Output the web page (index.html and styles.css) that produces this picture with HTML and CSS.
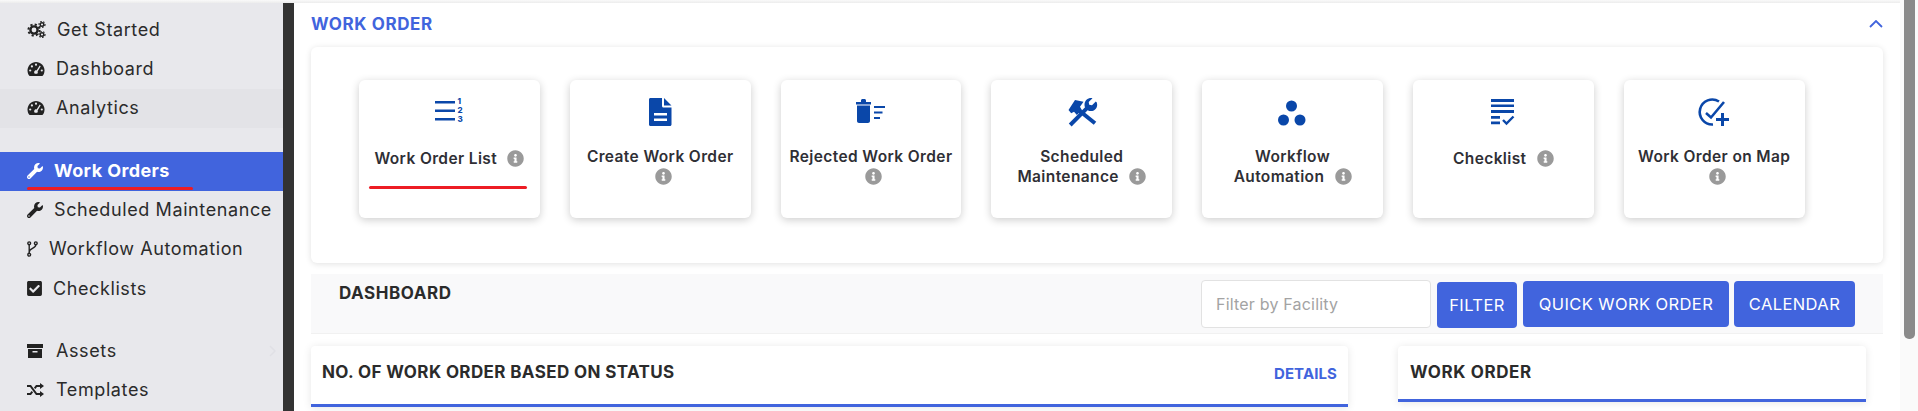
FILE: index.html
```html
<!DOCTYPE html>
<html lang="en">
<head>
  <meta charset="UTF-8" />
  <title>Work Order</title>
  <link rel="stylesheet" href="styles.css">
</head>
<body>
  <!-- Shared icons -->
  <svg class="sprite" xmlns="http://www.w3.org/2000/svg">
    <symbol id="i-info" viewBox="0 0 512 512">
      <path d="M256 8C119.043 8 8 119.083 8 256c0 136.997 111.043 248 248 248s248-111.003 248-248C504 119.083 392.957 8 256 8zm0 110c23.196 0 42 18.804 42 42s-18.804 42-42 42-42-18.804-42-42 18.804-42 42-42zm56 254c0 6.627-5.373 12-12 12h-88c-6.627 0-12-5.373-12-12v-24c0-6.627 5.373-12 12-12h12v-64h-12c-6.627 0-12-5.373-12-12v-24c0-6.627 5.373-12 12-12h64c6.627 0 12 5.373 12 12v100h12c6.627 0 12 5.373 12 12v24z"/>
    </symbol>
    <symbol id="i-wrench" viewBox="0 0 512 512">
      <path d="M507.73 109.1c-2.24-9.03-13.54-12.09-20.12-5.51l-74.36 74.36-67.88-11.31-11.31-67.88 74.36-74.36c6.62-6.62 3.43-17.9-5.66-20.16-47.38-11.74-99.55.91-136.58 37.93-39.64 39.64-50.55 97.1-34.05 147.2L18.74 402.76c-24.99 24.99-24.99 65.51 0 90.5 24.99 24.99 65.51 24.99 90.5 0l213.21-213.21c50.12 16.71 107.47 5.68 147.37-34.22 37.07-37.07 49.7-89.32 37.91-136.73zM64 472c-13.25 0-24-10.75-24-24 0-13.26 10.75-24 24-24s24 10.74 24 24c0 13.25-10.75 24-24 24z"/>
    </symbol>
    <symbol id="i-gauge" viewBox="0 0 18 16">
      <path d="M9 1C4.3 1 .5 4.8.5 9.5c0 1.9.6 3.6 1.6 5 .3.4.7.5 1.1.5h11.6c.4 0 .8-.1 1.1-.5 1-1.4 1.6-3.1 1.6-5C17.5 4.8 13.7 1 9 1z"/>
      <g fill="#e8e8ec">
        <circle cx="9" cy="3.7" r="1.1"/>
        <circle cx="4.9" cy="5.4" r="1.1"/>
        <circle cx="3.2" cy="9.5" r="1.1"/>
        <circle cx="14.8" cy="9.5" r="1.1"/>
        <path d="M12.7 4.6l1 .6-3.1 5.3c.4.9.2 1.8-.4 2.3H7.8c-.9-.8-.9-2.2 0-3 .6-.5 1.2-.6 1.8-.4z"/>
      </g>
    </symbol>
  </svg>

  <div class="layout">
    <div class="app">
      <div class="top-strip"></div>
      <div class="app-row">

        <!-- Sidebar -->
        <aside class="sidebar">
          <a class="nav-item">
            <svg class="nav-icon icon-cogs" viewBox="0 0 19 17">
              <g fill="none" stroke="#222">
                <circle cx="7" cy="9" r="3.6" stroke-width="2.4"/>
                <circle cx="7" cy="9" r="5.6" stroke-width="2" stroke-dasharray="2.2 2.2"/>
                <circle cx="15" cy="3.5" r="1.8" stroke-width="1.4"/>
                <circle cx="15" cy="3.5" r="3" stroke-width="1.2" stroke-dasharray="1.5 1.5"/>
                <circle cx="15" cy="13.5" r="1.8" stroke-width="1.4"/>
                <circle cx="15" cy="13.5" r="3" stroke-width="1.2" stroke-dasharray="1.5 1.5"/>
              </g>
            </svg>
            Get Started
          </a>
          <a class="nav-item">
            <svg class="nav-icon icon-gauge"><use href="#i-gauge"/></svg>
            Dashboard
          </a>
          <a class="nav-item nav-item-hover">
            <svg class="nav-icon icon-gauge"><use href="#i-gauge"/></svg>
            Analytics
          </a>

          <a class="nav-item nav-item-active nav-group">
            <svg class="nav-icon icon-wrench"><use href="#i-wrench"/></svg>
            Work Orders
          </a>
          <a class="nav-item">
            <svg class="nav-icon icon-wrench"><use href="#i-wrench"/></svg>
            Scheduled Maintenance
          </a>
          <a class="nav-item">
            <svg class="nav-icon icon-branch" viewBox="0 0 11 16">
              <g fill="none" stroke="#222" stroke-width="1.4">
                <circle cx="2.2" cy="2.3" r="1.4"/>
                <circle cx="8.8" cy="2.3" r="1.4"/>
                <circle cx="2.2" cy="13.7" r="1.4"/>
                <path d="M2.2 3.7v8.6M8.8 3.7c0 4-6.6 3.5-6.6 7.5"/>
              </g>
            </svg>
            Workflow Automation
          </a>
          <a class="nav-item nav-item-low">
            <svg class="nav-icon icon-check" viewBox="0 0 448 512">
              <path d="M400 480H48c-26.51 0-48-21.49-48-48V80c0-26.51 21.49-48 48-48h352c26.51 0 48 21.49 48 48v352c0 26.51-21.49 48-48 48zm-204.686-98.059l184-184c6.248-6.248 6.248-16.379 0-22.627l-22.627-22.627c-6.248-6.248-16.379-6.249-22.628 0L184 302.745l-70.059-70.059c-6.248-6.248-16.379-6.248-22.628 0l-22.627 22.627c-6.248 6.248-6.248 16.379 0 22.627l104 104c6.249 6.25 16.379 6.25 22.628.001z"/>
            </svg>
            Checklists
          </a>

          <a class="nav-item nav-group">
            <svg class="nav-icon icon-archive" viewBox="0 0 16 16">
              <path d="M0 1h16v4H0zM1 6h14v9H1zM5.5 8v1.5h5V8z" fill-rule="evenodd"/>
            </svg>
            Assets
            <svg class="nav-arrow" viewBox="0 0 8 12"><path d="M1 1l5 5-5 5" fill="none" stroke="#e0e0e5" stroke-width="1.5"/></svg>
          </a>
          <a class="nav-item">
            <svg class="nav-icon icon-shuffle" viewBox="0 0 17 14">
              <g fill="none" stroke="#222" stroke-width="2">
                <path d="M0 3h3.5l6 8h4M0 11h3.5l1.8-2.4M7.7 5.4L9.5 3h4"/>
              </g>
              <path d="M13 0l4 3-4 3zM13 8l4 3-4 3z" fill="#222"/>
            </svg>
            Templates
          </a>
        </aside>

        <!-- Main content -->
        <main class="content">
          <div class="section-head">
            <h2 class="section-title">WORK ORDER</h2>
            <svg class="chevron" viewBox="0 0 14 8"><path d="M1 7l6-6 6 6" fill="none" stroke="#4164dd" stroke-width="1.8"/></svg>
          </div>

          <div class="panel">
            <div class="tile">
              <svg class="tile-icon" width="28" height="28" viewBox="0 0 28 28">
                <path d="M0 3h20v2.4H0zM0 11.5h20v2.4H0zM0 20h20v2.4H0z"/>
                <text class="list-num" x="22.5" y="6">1</text>
                <text class="list-num" x="22.5" y="15">2</text>
                <text class="list-num" x="22.5" y="24">3</text>
              </svg>
              <p class="tile-label tile-label-single">Work Order List <svg class="info"><use href="#i-info"/></svg></p>
              <span class="tile-mark"></span>
            </div>

            <div class="tile">
              <svg class="tile-icon" width="28" height="28" viewBox="0 0 28 28">
                <path d="M4.5 0H16v8c0 .8.6 1.5 1.5 1.5h8v17c0 .8-.7 1.5-1.5 1.5H4.5C3.6 28 3 27.3 3 26.5v-25C3 .7 3.6 0 4.5 0zM18 0l7.5 7.5H18zM8 15v2.500h13V15zM8 20.500V23h13v-2.500z" fill-rule="evenodd"/>
              </svg>
              <p class="tile-label">Create Work Order <svg class="info"><use href="#i-info"/></svg></p>
            </div>

            <div class="tile">
              <svg class="tile-icon" width="30" height="28" viewBox="0 0 30 28">
                <path d="M0 4h15v2.5H0zM5 2.500C5 1.700 5.700 1 6.500 1h2c.8 0 1.500.7 1.500 1.500V4H5zM1 7.500h13V23c0 1.100-.9 2-2 2H3c-1.100 0-2-.9-2-2zM18 8h11v2h-11zM18 13.500h8.500v2H18zM18 19h6v2h-6z"/>
              </svg>
              <p class="tile-label">Rejected Work Order <svg class="info"><use href="#i-info"/></svg></p>
            </div>

            <div class="tile">
              <svg class="tile-icon" width="28" height="28" viewBox="0 0 28 28">
                <path d="M2.2 27L20.500 8.700" fill="none" stroke-width="4"/>
                <path d="M10.500 12L27 25.300" fill="none" stroke-width="4"/>
                <path d="M.5 12L7 2l8.500 1.700L12 8.700l1.800 3.300-4.900 5-2.900-3.300-2.800 1.600z"/>
                <path d="M27.800 3.500l-3.800 3.800-2.800-.5-.5-2.800 3.800-3.800c-4-.8-8 2-8 6.500 0 1 .2 2 .6 2.800l3 3c.9.4 1.800.6 2.700.6 4.500 0 7.500-4 6-8.600z"/>
              </svg>
              <p class="tile-label">Scheduled Maintenance <svg class="info"><use href="#i-info"/></svg></p>
            </div>

            <div class="tile">
              <svg class="tile-icon" width="28" height="28" viewBox="0 0 28 28">
                <circle cx="12.5" cy="8" r="5.5"/>
                <circle cx="4.5" cy="22" r="5.5"/>
                <circle cx="21" cy="22" r="5.5"/>
              </svg>
              <p class="tile-label">Workflow<br>Automation <svg class="info"><use href="#i-info"/></svg></p>
            </div>

            <div class="tile">
              <svg class="tile-icon" width="28" height="28" viewBox="0 0 28 28">
                <path d="M2 1h23v3H2zM2 6.500h23v2.500H2zM2 12h23v3H2zM2 18h9v2.800H2zM2 23.500h9v2.800H2z"/>
                <path d="M14 22l3.500 3.500 7-7" fill="none" stroke-width="2.4"/>
              </svg>
              <p class="tile-label tile-label-single">Checklist <svg class="info"><use href="#i-info"/></svg></p>
            </div>

            <div class="tile">
              <svg class="tile-icon" width="32" height="28" viewBox="0 0 32 28">
                <path d="M21 3.500A12.500 12.500 0 1 0 15 26.500" fill="none" stroke-width="2.6"/>
                <path d="M8 15l5 4.500L26 4" fill="none" stroke-width="2.6"/>
                <path d="M23 15h3v5h5v3h-5v5h-3v-5h-5v-3h5z"/>
              </svg>
              <p class="tile-label">Work Order on Map <svg class="info"><use href="#i-info"/></svg></p>
            </div>
          </div>

          <!-- Dashboard bar -->
          <div class="dash-bar">
            <h3 class="dash-title">DASHBOARD</h3>
            <div class="dash-actions">
              <input class="filter-input" type="text" placeholder="Filter by Facility">
              <button class="btn btn-filter">FILTER</button>
              <button class="btn btn-quick">QUICK WORK ORDER</button>
              <button class="btn btn-calendar">CALENDAR</button>
            </div>
          </div>

          <div class="chart-row">
            <div class="chart-card chart-card-status">
              <h3 class="chart-title">NO. OF WORK ORDER BASED ON STATUS</h3>
              <a class="details-link">DETAILS</a>
            </div>
            <div class="chart-card chart-card-order">
              <h3 class="chart-title">WORK ORDER</h3>
            </div>
          </div>
        </main>
      </div>
    </div>

    <!-- Scrollbar -->
    <div class="scroll-track"><div class="scroll-thumb"></div></div>
  </div>
</body>
</html>
```
FILE: styles.css
```css
* {
  margin: 0;
  padding: 0;
  box-sizing: border-box;
  font-family: 'Inter', 'Liberation Sans', sans-serif;
}
html, body {
  height: 411px;
  overflow: hidden;
  background: #fff;
  color: #2b2b2f;
}
.sprite {
  position: absolute;
  width: 0;
  height: 0;
}
.layout {
  display: flex;
  height: 411px;
}
.app {
  flex: 1;
  min-width: 0;
  display: flex;
  flex-direction: column;
}
.top-strip {
  height: 3px;
  background: linear-gradient(to bottom, #fafafa, #ececec);
}
.app-row {
  flex: 1;
  min-height: 0;
  display: flex;
}

/* Sidebar */
.sidebar {
  width: 294px;
  flex-shrink: 0;
  padding-top: 8px;
  background: #e8e8ec;
  border-right: 11px solid #333;
}
.nav-item {
  display: flex;
  align-items: center;
  gap: 11px;
  height: 39px;
  padding: 0 0 2px 27px;
  font-size: 18px;
  letter-spacing: 0.6px;
  color: #2b2b2b;
  position: relative;
}
.nav-group {
  margin-top: 24px;
}
.nav-item-low {
  padding-bottom: 0;
}
.nav-item-hover {
  background: #e3e3e7;
}
.nav-item-active {
  background: #4164dd;
  color: #fff;
  font-weight: 700;
  letter-spacing: 0.4px;
}
.nav-item-active .nav-icon {
  fill: #fff;
}
.nav-item-active::after {
  content: "";
  position: absolute;
  left: 27px;
  bottom: 1px;
  width: 166px;
  height: 3px;
  border-radius: 2px;
  background: #ed1c24;
}
.nav-icon {
  flex-shrink: 0;
  fill: #222;
}
.icon-cogs { width: 19px; height: 17px; }
.icon-gauge { width: 18px; height: 16px; }
.icon-wrench { width: 16px; height: 16px; }
.icon-branch { width: 11px; height: 16px; }
.icon-check { width: 15px; height: 17px; }
.icon-archive { width: 16px; height: 16px; margin-right: 2px; }
.icon-shuffle { width: 17px; height: 14px; margin-right: 1px; }
.nav-arrow {
  width: 8px;
  height: 12px;
  margin-left: auto;
  margin-right: 6px;
}

/* Main */
.content {
  flex: 1;
  min-width: 0;
  padding-left: 17px;
  overflow: hidden;
}
.section-head {
  display: flex;
  align-items: center;
  justify-content: space-between;
  width: 1572px;
  height: 44px;
  padding: 0 0 2px 0;
}
.section-title {
  font-size: 17px;
  font-weight: 700;
  letter-spacing: 0.6px;
  color: #4164dd;
}
.chevron {
  width: 14px;
  height: 8px;
}
.panel {
  display: flex;
  gap: 30px;
  width: 1572px;
  height: 216px;
  padding: 33px 0 0 48px;
  border-radius: 6px;
  background: #fff;
  box-shadow: 0 1px 6px rgba(0, 0, 0, 0.12);
}
.tile {
  width: 180.8px;
  height: 138px;
  padding: 18px 6px 0;
  position: relative;
  text-align: center;
  border-radius: 6px;
  background: #fff;
  box-shadow: 0 2px 8px rgba(0, 0, 0, 0.2);
}
.tile-icon {
  display: block;
  margin: 0 auto;
  fill: #0a47a9;
  stroke: #0a47a9;
  stroke-width: 0;
  overflow: visible;
}
.tile-label {
  margin-top: 21px;
  font-size: 15.5px;
  font-weight: 600;
  letter-spacing: 0.38px;
  line-height: 20px;
  color: #2f2f35;
}
.tile-label-single {
  line-height: 24px;
}
.info {
  width: 17px;
  height: 17px;
  margin-left: 6px;
  vertical-align: -3px;
  fill: #9a9a9a;
}
.tile-mark {
  position: absolute;
  left: 10px;
  top: 106px;
  width: 158px;
  height: 3px;
  border-radius: 2px;
  background: #ed1c24;
}
.list-num {
  font-size: 8px;
  font-weight: 800;
  fill: #0a47a9;
}

/* Dashboard bar */
.dash-bar {
  display: flex;
  justify-content: space-between;
  width: 1572px;
  height: 60px;
  margin-top: 11px;
  padding: 6px 28px 0;
  background: #f9f9fa;
  border-bottom: 1px solid #f1f1f1;
}
.dash-title {
  margin-top: 3px;
  font-size: 17px;
  font-weight: 700;
  letter-spacing: 0.55px;
  color: #2b2b2b;
}
.dash-actions {
  display: flex;
  align-items: flex-start;
  gap: 6px;
}
.filter-input {
  width: 230px;
  height: 48px;
  padding: 0 14px;
  font-size: 16px;
  letter-spacing: 0.2px;
  color: #333;
  background: #fff;
  border: 1px solid #e2e2e2;
  border-radius: 4px;
}
.filter-input::placeholder {
  color: #a3a3a3;
}
.btn {
  height: 46px;
  font-size: 16.5px;
  letter-spacing: 0.4px;
  color: #fff;
  background: #4164dd;
  border: none;
  border-radius: 4px;
}
.btn-filter {
  width: 80px;
  margin-top: 2px;
}
.btn-quick {
  width: 206px;
  margin-top: 1px;
}
.btn-calendar {
  width: 121px;
  margin-top: 1px;
  margin-left: -1px;
}

/* Chart cards */
.chart-row {
  display: flex;
  gap: 50px;
  margin-top: 12px;
}
.chart-card {
  display: flex;
  justify-content: space-between;
  align-items: flex-start;
  border-radius: 4px 4px 0 0;
  background: #fff;
  box-shadow: 0 1px 8px rgba(0, 0, 0, 0.1);
}
.chart-card-status {
  width: 1037px;
  height: 61px;
  padding: 16px 11px 0 11px;
  border-bottom: 3px solid #4164dd;
}
.chart-card-order {
  width: 468px;
  height: 56px;
  padding: 16px 12px 0 12px;
  border-bottom: 3px solid #4164dd;
}
.chart-title {
  font-size: 17px;
  font-weight: 700;
  letter-spacing: 0.38px;
  color: #2b2b2b;
}
.chart-card-order .chart-title {
  letter-spacing: 0.6px;
}
.details-link {
  margin-top: 2px;
  font-size: 15px;
  font-weight: 700;
  letter-spacing: 0.1px;
  color: #4164dd;
}

/* Scrollbar */
.scroll-track {
  width: 18px;
  flex-shrink: 0;
  padding: 0 3px 0 4px;
  background: #fafafa;
}
.scroll-thumb {
  height: 339px;
  border-radius: 0 0 5px 5px;
  background: #8a8a8a;
}
```
